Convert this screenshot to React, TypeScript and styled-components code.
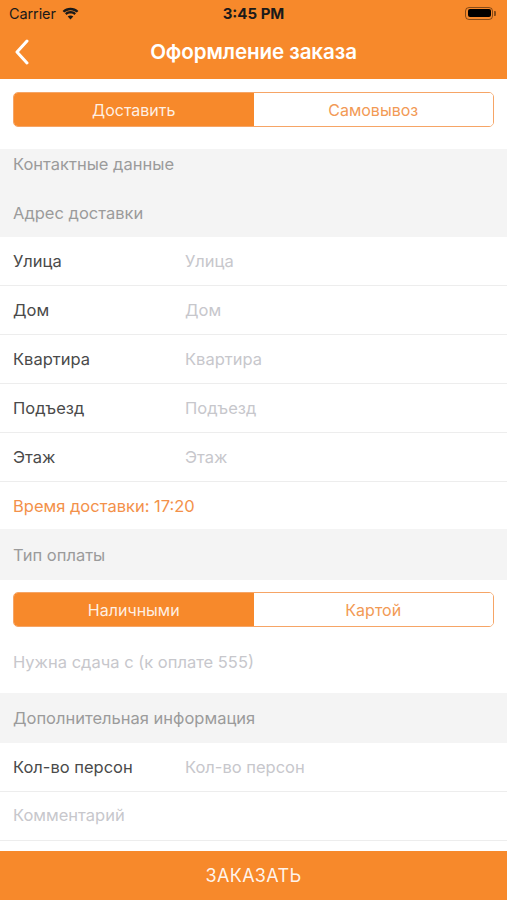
import React from "react";
import styled, { createGlobalStyle } from "styled-components";

const ORANGE = "#F7892B";

const Global = createGlobalStyle`
  html, body { margin: 0; padding: 0; background: #fff; }
  body { font-family: Inter, "Noto Sans", "Liberation Sans", sans-serif; -webkit-font-smoothing: antialiased; }
  * { box-sizing: border-box; }
`;

const Screen = styled.div`
  width: 507px;
  height: 900px;
  display: flex;
  flex-direction: column;
  background: #fff;
  overflow: hidden;
`;

const Top = styled.div`
  background: ${ORANGE};
  display: flex;
  flex-direction: column;
`;

const StatusBar = styled.div`
  height: 24px;
  display: grid;
  grid-template-columns: 1fr auto 1fr;
  align-items: center;
  padding: 2px 9px 0 9px;
  color: #1a1a1a;
  font-size: 14.5px;
`;

const Carrier = styled.div`
  display: flex;
  align-items: center;
  gap: 6px;
  letter-spacing: -0.1px;
`;

const Clock = styled.div`
  font-weight: 700;
  font-size: 15px;
`;

const BatteryWrap = styled.div`
  justify-self: end;
  display: flex;
  align-items: center;
  gap: 1px;
  margin-right: 2px;
`;

const BatteryBody = styled.div`
  width: 28px;
  height: 13px;
  border: 1px solid rgba(0,0,0,0.45);
  border-radius: 4px;
  padding: 1.5px;
  display: flex;
`;

const BatteryFill = styled.div`
  flex: 1;
  background: #000;
  border-radius: 2px;
`;

const BatteryNub = styled.div`
  width: 2px;
  height: 5px;
  background: rgba(0,0,0,0.45);
  border-radius: 0 1px 1px 0;
`;

const NavBar = styled.div`
  height: 55px;
  display: grid;
  grid-template-columns: 60px 1fr 60px;
  align-items: center;
`;

const BackBtn = styled.div`
  padding-left: 14px;
  display: flex;
  align-items: center;
`;

const Title = styled.div`
  text-align: center;
  color: #fff;
  font-weight: 600;
  font-size: 20.6px;
  letter-spacing: -0.1px;
`;

const SegmentWrap = styled.div<{ $top: number; $bottom: number }>`
  padding: ${(p) => p.$top}px 13px ${(p) => p.$bottom}px 13px;
  background: #fff;
`;

const Segment = styled.div`
  height: 35px;
  display: grid;
  grid-template-columns: 1fr 1fr;
  border: 1.5px solid #F6A566;
  border-radius: 5px;
  overflow: hidden;
`;

const SegItem = styled.div<{ $active?: boolean }>`
  display: flex;
  align-items: center;
  justify-content: center;
  font-size: 16px;
  background: ${(p) => (p.$active ? ORANGE : "#fff")};
  color: ${(p) => (p.$active ? "rgba(255,255,255,0.88)" : "#F29A55")};
`;

const SectionHeader = styled.div<{ $h: number; $pb?: number }>`
  height: ${(p) => p.$h}px;
  background: #F4F4F4;
  display: flex;
  align-items: center;
  padding-left: 13px;
  padding-bottom: ${(p) => p.$pb ?? 0}px;
  color: #9b9b9b;
  font-size: 16.5px;
`;

const Row = styled.div<{ $h?: number; $divider?: boolean; $pb?: number }>`
  height: ${(p) => p.$h ?? 49}px;
  display: flex;
  align-items: center;
  padding-left: 13px;
  padding-bottom: ${(p) => p.$pb ?? 0}px;
  border-bottom: ${(p) => (p.$divider === false ? "none" : "1px solid #EDEDED")};
  font-size: 16.5px;
`;

const Label = styled.div`
  width: 172px;
  color: #4a4a4a;
`;

const Placeholder = styled.div`
  color: #C7C7CC;
`;

const TimeText = styled.div`
  color: #F3914A;
`;

const Spacer = styled.div`
  flex: 1;
`;

const OrderButton = styled.div`
  height: 49px;
  background: ${ORANGE};
  color: rgba(255,255,255,0.92);
  display: flex;
  align-items: center;
  justify-content: center;
  font-size: 18px;
  letter-spacing: 0.3px;
`;

const Wifi = () => (
  <svg width="17" height="13" viewBox="0 0 17 13">
    <path d="M8.5 3.2c2.4 0 4.6.9 6.3 2.4l1.6-1.7C14.3 2 11.5.8 8.5.8S2.7 2 .6 3.9l1.6 1.7C3.9 4.1 6.1 3.2 8.5 3.2z" fill="#1a1a1a" />
    <path d="M8.5 6.5c1.5 0 2.8.5 3.9 1.4l1.6-1.7C12.5 4.9 10.6 4.1 8.5 4.1S4.5 4.9 3 6.2l1.6 1.7c1.1-.9 2.4-1.4 3.9-1.4z" fill="#1a1a1a" />
    <path d="M8.5 12.4l2.8-3c-.8-.6-1.7-1-2.8-1s-2 .4-2.8 1z" fill="#1a1a1a" />
  </svg>
);

const Chevron = () => (
  <svg width="16" height="26" viewBox="0 0 16 26">
    <path d="M13 2L3 13l10 11" fill="none" stroke="#fff" strokeWidth="3" strokeLinecap="round" strokeLinejoin="round" />
  </svg>
);

const addressFields = ["Улица", "Дом", "Квартира", "Подъезд", "Этаж"];

export default function App() {
  return (
    <Screen>
      <Global />
      <Top>
        <StatusBar>
          <Carrier>
            Carrier <Wifi />
          </Carrier>
          <Clock>3:45 PM</Clock>
          <BatteryWrap>
            <BatteryBody>
              <BatteryFill />
            </BatteryBody>
            <BatteryNub />
          </BatteryWrap>
        </StatusBar>
        <NavBar>
          <BackBtn>
            <Chevron />
          </BackBtn>
          <Title>Оформление заказа</Title>
          <div />
        </NavBar>
      </Top>

      <SegmentWrap $top={13} $bottom={22}>
        <Segment>
          <SegItem $active>Доставить</SegItem>
          <SegItem>Самовывоз</SegItem>
        </Segment>
      </SegmentWrap>

      <SectionHeader $h={39} $pb={9}>Контактные данные</SectionHeader>
      <SectionHeader $h={49}>Адрес доставки</SectionHeader>

      {addressFields.map((f) => (
        <Row key={f}>
          <Label>{f}</Label>
          <Placeholder>{f}</Placeholder>
        </Row>
      ))}

      <Row $h={47} $divider={false}>
        <TimeText>Время доставки: 17:20</TimeText>
      </Row>

      <SectionHeader $h={51}>Тип оплаты</SectionHeader>

      <SegmentWrap $top={12} $bottom={11}>
        <Segment>
          <SegItem $active>Наличными</SegItem>
          <SegItem>Картой</SegItem>
        </Segment>
      </SegmentWrap>

      <Row $h={55} $pb={8} $divider={false}>
        <Placeholder>Нужна сдача с (к оплате 555)</Placeholder>
      </Row>

      <SectionHeader $h={50}>Дополнительная информация</SectionHeader>

      <Row>
        <Label>Кол-во персон</Label>
        <Placeholder>Кол-во персон</Placeholder>
      </Row>
      <Row $pb={3}>
        <Placeholder>Комментарий</Placeholder>
      </Row>

      <Spacer />
      <OrderButton>ЗАКАЗАТЬ</OrderButton>
    </Screen>
  );
}
